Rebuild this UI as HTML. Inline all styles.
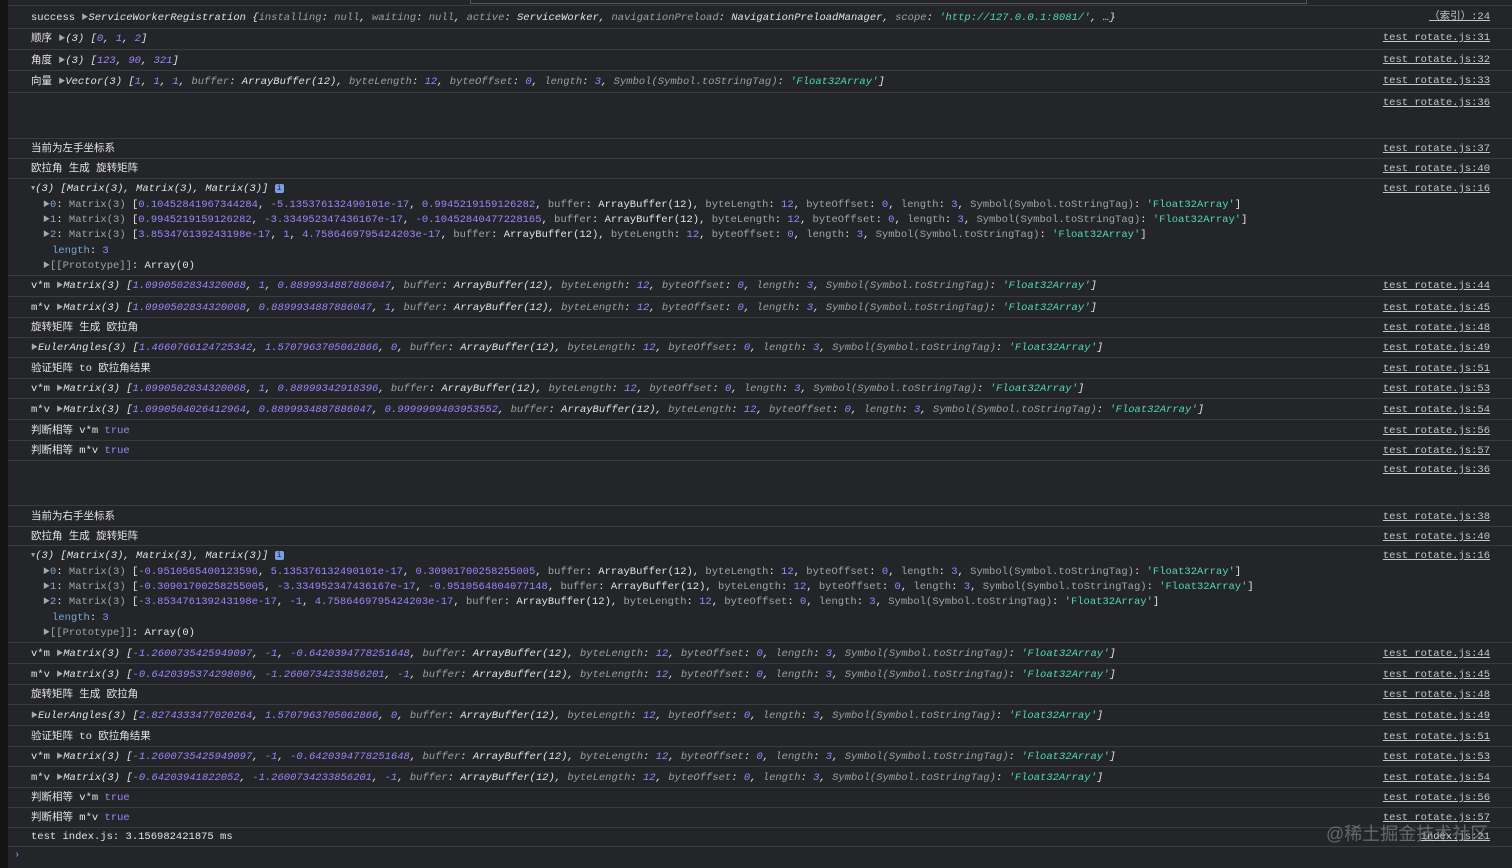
<!DOCTYPE html>
<html><head><meta charset="utf-8"><style>
html,body{margin:0;padding:0;width:1512px;height:868px;overflow:hidden;background:#242528;}
body{font-family:"Liberation Mono","Noto Sans CJK SC",monospace;font-size:10.5px;color:#e3e3e3;position:relative;}
.l{position:absolute;left:31px;white-space:pre;line-height:14px;transform:translateY(1px);}
.a{position:absolute;right:22px;white-space:pre;line-height:14px;color:#c4c7c5;text-decoration:underline;transform:translateY(1px);}
.sep{position:absolute;left:8px;right:0;height:1px;background:#3a3b3e;}
.n{color:#9b86ff}.s{color:#4fd8b8}.k{color:#9aa0a6}.i{font-style:italic}.g{color:#a0a4a8}.lk{color:#7ba6d6}
.tri{color:#a8a8a8;font-size:7px;vertical-align:1px}
.left{position:absolute;left:0;top:0;width:8px;height:868px;background:#141414;}
.top{position:absolute;left:8px;top:0;right:0;height:5px;background:#242528;border-bottom:1px solid #3a3b3e;}
.info{display:inline-block;width:9px;height:9px;background:#7a9ee6;border-radius:2px;color:#222;font-size:8px;line-height:9px;text-align:center;font-style:normal;vertical-align:1px}
</style></head><body>
<div class="left"></div>
<div class="top"><div style="position:absolute;left:462px;top:0;width:835px;height:3px;border:1px solid #555;border-top:none"></div></div>

<div class="l" style="top:10px">success <span class="tri">▶</span><span class="i">ServiceWorkerRegistration {<span class="k">installing</span>: <span class="k">null</span>, <span class="k">waiting</span>: <span class="k">null</span>, <span class="k">active</span>: ServiceWorker, <span class="k">navigationPreload</span>: NavigationPreloadManager, <span class="k">scope</span>: <span class="s">'http://127.0.0.1:8081/'</span>, …}</span></div>
<div class="a" style="top:9px">（索引）:24</div>
<div class="sep" style="top:28px"></div>
<div class="l" style="top:31px">顺序 <span class="tri">▶</span><span class="i">(3) [<span class="n">0</span>, <span class="n">1</span>, <span class="n">2</span>]</span></div><div class="a" style="top:30px">test rotate.js:31</div>
<div class="sep" style="top:49px"></div>
<div class="l" style="top:53px">角度 <span class="tri">▶</span><span class="i">(3) [<span class="n">123</span>, <span class="n">90</span>, <span class="n">321</span>]</span></div><div class="a" style="top:52px">test rotate.js:32</div>
<div class="sep" style="top:70px"></div>
<div class="l" style="top:74px">向量 <span class="tri">▶</span><span class="i">Vector(3) [<span class="n">1</span>, <span class="n">1</span>, <span class="n">1</span>, <span class="k">buffer</span>: ArrayBuffer(12), <span class="k">byteLength</span>: <span class="n">12</span>, <span class="k">byteOffset</span>: <span class="n">0</span>, <span class="k">length</span>: <span class="n">3</span>, <span class="k">Symbol(Symbol.toStringTag)</span>: <span class="s">'Float32Array'</span>]</span></div><div class="a" style="top:73px">test rotate.js:33</div>
<div class="sep" style="top:92px"></div>
<div class="a" style="top:95px">test rotate.js:36</div>
<div class="sep" style="top:138px"></div>
<div class="l" style="top:141px">当前为左手坐标系</div><div class="a" style="top:141px">test rotate.js:37</div>
<div class="sep" style="top:158px"></div>
<div class="l" style="top:161px">欧拉角 生成 旋转矩阵</div><div class="a" style="top:161px">test rotate.js:40</div>
<div class="sep" style="top:178px"></div>
<div class="l" style="top:181px"><span class="tri">▼</span><span class="i">(3) [Matrix(3), Matrix(3), Matrix(3)]</span> <span class="info">i</span></div><div class="a" style="top:181px">test rotate.js:16</div>
<div class="l" style="top:197px;left:43px"><span class="tri">▶</span><span class="lk">0</span>: <span class="g">Matrix(3)</span> [<span class="n">0.10452841967344284</span>, <span class="n">-5.135376132490101e-17</span>, <span class="n">0.9945219159126282</span>, <span class="g">buffer</span>: ArrayBuffer(12), <span class="g">byteLength</span>: <span class="n">12</span>, <span class="g">byteOffset</span>: <span class="n">0</span>, <span class="g">length</span>: <span class="n">3</span>, <span class="g">Symbol(Symbol.toStringTag)</span>: <span class="s">'Float32Array'</span>]</div>
<div class="l" style="top:212px;left:43px"><span class="tri">▶</span><span class="lk">1</span>: <span class="g">Matrix(3)</span> [<span class="n">0.9945219159126282</span>, <span class="n">-3.334952347436167e-17</span>, <span class="n">-0.10452840477228165</span>, <span class="g">buffer</span>: ArrayBuffer(12), <span class="g">byteLength</span>: <span class="n">12</span>, <span class="g">byteOffset</span>: <span class="n">0</span>, <span class="g">length</span>: <span class="n">3</span>, <span class="g">Symbol(Symbol.toStringTag)</span>: <span class="s">'Float32Array'</span>]</div>
<div class="l" style="top:227px;left:43px"><span class="tri">▶</span><span class="lk">2</span>: <span class="g">Matrix(3)</span> [<span class="n">3.853476139243198e-17</span>, <span class="n">1</span>, <span class="n">4.7586469795424203e-17</span>, <span class="g">buffer</span>: ArrayBuffer(12), <span class="g">byteLength</span>: <span class="n">12</span>, <span class="g">byteOffset</span>: <span class="n">0</span>, <span class="g">length</span>: <span class="n">3</span>, <span class="g">Symbol(Symbol.toStringTag)</span>: <span class="s">'Float32Array'</span>]</div>
<div class="l" style="top:243px;left:52px"><span class="lk">length</span>: <span class="n">3</span></div>
<div class="l" style="top:258px;left:43px"><span class="tri">▶</span><span class="g">[[Prototype]]</span>: Array(0)</div>
<div class="sep" style="top:275px"></div>
<div class="l" style="top:278px">v*m <span class="tri">▶</span><span class="i">Matrix(3) [<span class="n">1.0990502834320068</span>, <span class="n">1</span>, <span class="n">0.8899934887886047</span>, <span class="k">buffer</span>: ArrayBuffer(12), <span class="k">byteLength</span>: <span class="n">12</span>, <span class="k">byteOffset</span>: <span class="n">0</span>, <span class="k">length</span>: <span class="n">3</span>, <span class="k">Symbol(Symbol.toStringTag)</span>: <span class="s">'Float32Array'</span>]</span></div><div class="a" style="top:278px">test rotate.js:44</div>
<div class="sep" style="top:296px"></div>
<div class="l" style="top:300px">m*v <span class="tri">▶</span><span class="i">Matrix(3) [<span class="n">1.0990502834320068</span>, <span class="n">0.8899934887886047</span>, <span class="n">1</span>, <span class="k">buffer</span>: ArrayBuffer(12), <span class="k">byteLength</span>: <span class="n">12</span>, <span class="k">byteOffset</span>: <span class="n">0</span>, <span class="k">length</span>: <span class="n">3</span>, <span class="k">Symbol(Symbol.toStringTag)</span>: <span class="s">'Float32Array'</span>]</span></div><div class="a" style="top:300px">test rotate.js:45</div>
<div class="sep" style="top:317px"></div>
<div class="l" style="top:320px">旋转矩阵 生成 欧拉角</div><div class="a" style="top:320px">test rotate.js:48</div>
<div class="sep" style="top:337px"></div>
<div class="l" style="top:340px"><span class="tri">▶</span><span class="i">EulerAngles(3) [<span class="n">1.4660766124725342</span>, <span class="n">1.5707963705062866</span>, <span class="n">0</span>, <span class="k">buffer</span>: ArrayBuffer(12), <span class="k">byteLength</span>: <span class="n">12</span>, <span class="k">byteOffset</span>: <span class="n">0</span>, <span class="k">length</span>: <span class="n">3</span>, <span class="k">Symbol(Symbol.toStringTag)</span>: <span class="s">'Float32Array'</span>]</span></div><div class="a" style="top:340px">test rotate.js:49</div>
<div class="sep" style="top:357px"></div>
<div class="l" style="top:361px">验证矩阵 to 欧拉角结果</div><div class="a" style="top:361px">test rotate.js:51</div>
<div class="sep" style="top:378px"></div>
<div class="l" style="top:381px">v*m <span class="tri">▶</span><span class="i">Matrix(3) [<span class="n">1.0990502834320068</span>, <span class="n">1</span>, <span class="n">0.88999342918396</span>, <span class="k">buffer</span>: ArrayBuffer(12), <span class="k">byteLength</span>: <span class="n">12</span>, <span class="k">byteOffset</span>: <span class="n">0</span>, <span class="k">length</span>: <span class="n">3</span>, <span class="k">Symbol(Symbol.toStringTag)</span>: <span class="s">'Float32Array'</span>]</span></div><div class="a" style="top:381px">test rotate.js:53</div>
<div class="sep" style="top:398px"></div>
<div class="l" style="top:402px">m*v <span class="tri">▶</span><span class="i">Matrix(3) [<span class="n">1.0990504026412964</span>, <span class="n">0.8899934887886047</span>, <span class="n">0.9999999403953552</span>, <span class="k">buffer</span>: ArrayBuffer(12), <span class="k">byteLength</span>: <span class="n">12</span>, <span class="k">byteOffset</span>: <span class="n">0</span>, <span class="k">length</span>: <span class="n">3</span>, <span class="k">Symbol(Symbol.toStringTag)</span>: <span class="s">'Float32Array'</span>]</span></div><div class="a" style="top:402px">test rotate.js:54</div>
<div class="sep" style="top:419px"></div>
<div class="l" style="top:423px">判断相等 v*m <span class="n">true</span></div><div class="a" style="top:423px">test rotate.js:56</div>
<div class="sep" style="top:440px"></div>
<div class="l" style="top:443px">判断相等 m*v <span class="n">true</span></div><div class="a" style="top:443px">test rotate.js:57</div>
<div class="sep" style="top:460px"></div>
<div class="a" style="top:462px">test rotate.js:36</div>
<div class="sep" style="top:505px"></div>
<div class="l" style="top:509px">当前为右手坐标系</div><div class="a" style="top:509px">test rotate.js:38</div>
<div class="sep" style="top:526px"></div>
<div class="l" style="top:529px">欧拉角 生成 旋转矩阵</div><div class="a" style="top:529px">test rotate.js:40</div>
<div class="sep" style="top:545px"></div>
<div class="l" style="top:548px"><span class="tri">▼</span><span class="i">(3) [Matrix(3), Matrix(3), Matrix(3)]</span> <span class="info">i</span></div><div class="a" style="top:548px">test rotate.js:16</div>
<div class="l" style="top:564px;left:43px"><span class="tri">▶</span><span class="lk">0</span>: <span class="g">Matrix(3)</span> [<span class="n">-0.9510565400123596</span>, <span class="n">5.135376132490101e-17</span>, <span class="n">0.30901700258255005</span>, <span class="g">buffer</span>: ArrayBuffer(12), <span class="g">byteLength</span>: <span class="n">12</span>, <span class="g">byteOffset</span>: <span class="n">0</span>, <span class="g">length</span>: <span class="n">3</span>, <span class="g">Symbol(Symbol.toStringTag)</span>: <span class="s">'Float32Array'</span>]</div>
<div class="l" style="top:579px;left:43px"><span class="tri">▶</span><span class="lk">1</span>: <span class="g">Matrix(3)</span> [<span class="n">-0.30901700258255005</span>, <span class="n">-3.334952347436167e-17</span>, <span class="n">-0.9510564804077148</span>, <span class="g">buffer</span>: ArrayBuffer(12), <span class="g">byteLength</span>: <span class="n">12</span>, <span class="g">byteOffset</span>: <span class="n">0</span>, <span class="g">length</span>: <span class="n">3</span>, <span class="g">Symbol(Symbol.toStringTag)</span>: <span class="s">'Float32Array'</span>]</div>
<div class="l" style="top:594px;left:43px"><span class="tri">▶</span><span class="lk">2</span>: <span class="g">Matrix(3)</span> [<span class="n">-3.853476139243198e-17</span>, <span class="n">-1</span>, <span class="n">4.7586469795424203e-17</span>, <span class="g">buffer</span>: ArrayBuffer(12), <span class="g">byteLength</span>: <span class="n">12</span>, <span class="g">byteOffset</span>: <span class="n">0</span>, <span class="g">length</span>: <span class="n">3</span>, <span class="g">Symbol(Symbol.toStringTag)</span>: <span class="s">'Float32Array'</span>]</div>
<div class="l" style="top:610px;left:52px"><span class="lk">length</span>: <span class="n">3</span></div>
<div class="l" style="top:625px;left:43px"><span class="tri">▶</span><span class="g">[[Prototype]]</span>: Array(0)</div>
<div class="sep" style="top:642px"></div>
<div class="l" style="top:646px">v*m <span class="tri">▶</span><span class="i">Matrix(3) [<span class="n">-1.2600735425949097</span>, <span class="n">-1</span>, <span class="n">-0.6420394778251648</span>, <span class="k">buffer</span>: ArrayBuffer(12), <span class="k">byteLength</span>: <span class="n">12</span>, <span class="k">byteOffset</span>: <span class="n">0</span>, <span class="k">length</span>: <span class="n">3</span>, <span class="k">Symbol(Symbol.toStringTag)</span>: <span class="s">'Float32Array'</span>]</span></div><div class="a" style="top:646px">test rotate.js:44</div>
<div class="sep" style="top:663px"></div>
<div class="l" style="top:667px">m*v <span class="tri">▶</span><span class="i">Matrix(3) [<span class="n">-0.6420395374298096</span>, <span class="n">-1.2600734233856201</span>, <span class="n">-1</span>, <span class="k">buffer</span>: ArrayBuffer(12), <span class="k">byteLength</span>: <span class="n">12</span>, <span class="k">byteOffset</span>: <span class="n">0</span>, <span class="k">length</span>: <span class="n">3</span>, <span class="k">Symbol(Symbol.toStringTag)</span>: <span class="s">'Float32Array'</span>]</span></div><div class="a" style="top:667px">test rotate.js:45</div>
<div class="sep" style="top:684px"></div>
<div class="l" style="top:687px">旋转矩阵 生成 欧拉角</div><div class="a" style="top:687px">test rotate.js:48</div>
<div class="sep" style="top:704px"></div>
<div class="l" style="top:708px"><span class="tri">▶</span><span class="i">EulerAngles(3) [<span class="n">2.8274333477020264</span>, <span class="n">1.5707963705062866</span>, <span class="n">0</span>, <span class="k">buffer</span>: ArrayBuffer(12), <span class="k">byteLength</span>: <span class="n">12</span>, <span class="k">byteOffset</span>: <span class="n">0</span>, <span class="k">length</span>: <span class="n">3</span>, <span class="k">Symbol(Symbol.toStringTag)</span>: <span class="s">'Float32Array'</span>]</span></div><div class="a" style="top:708px">test rotate.js:49</div>
<div class="sep" style="top:725px"></div>
<div class="l" style="top:729px">验证矩阵 to 欧拉角结果</div><div class="a" style="top:729px">test rotate.js:51</div>
<div class="sep" style="top:746px"></div>
<div class="l" style="top:749px">v*m <span class="tri">▶</span><span class="i">Matrix(3) [<span class="n">-1.2600735425949097</span>, <span class="n">-1</span>, <span class="n">-0.6420394778251648</span>, <span class="k">buffer</span>: ArrayBuffer(12), <span class="k">byteLength</span>: <span class="n">12</span>, <span class="k">byteOffset</span>: <span class="n">0</span>, <span class="k">length</span>: <span class="n">3</span>, <span class="k">Symbol(Symbol.toStringTag)</span>: <span class="s">'Float32Array'</span>]</span></div><div class="a" style="top:749px">test rotate.js:53</div>
<div class="sep" style="top:766px"></div>
<div class="l" style="top:770px">m*v <span class="tri">▶</span><span class="i">Matrix(3) [<span class="n">-0.64203941822052</span>, <span class="n">-1.2600734233856201</span>, <span class="n">-1</span>, <span class="k">buffer</span>: ArrayBuffer(12), <span class="k">byteLength</span>: <span class="n">12</span>, <span class="k">byteOffset</span>: <span class="n">0</span>, <span class="k">length</span>: <span class="n">3</span>, <span class="k">Symbol(Symbol.toStringTag)</span>: <span class="s">'Float32Array'</span>]</span></div><div class="a" style="top:770px">test rotate.js:54</div>
<div class="sep" style="top:787px"></div>
<div class="l" style="top:790px">判断相等 v*m <span class="n">true</span></div><div class="a" style="top:790px">test rotate.js:56</div>
<div class="sep" style="top:807px"></div>
<div class="l" style="top:810px">判断相等 m*v <span class="n">true</span></div><div class="a" style="top:810px">test rotate.js:57</div>
<div class="sep" style="top:827px"></div>
<div class="l" style="top:829px">test index.js: 3.156982421875 ms</div><div class="a" style="top:829px">index.js:21</div>
<div class="sep" style="top:846px"></div>
<div class="l" style="top:847px;left:14px;color:#7aa7f0">›</div>
<div style="position:absolute;left:1326px;top:820px;font-family:'Liberation Sans','Noto Sans CJK SC',sans-serif;font-size:18px;color:rgba(200,200,200,0.4);white-space:nowrap">@稀土掘金技术社区</div>
</body></html>
